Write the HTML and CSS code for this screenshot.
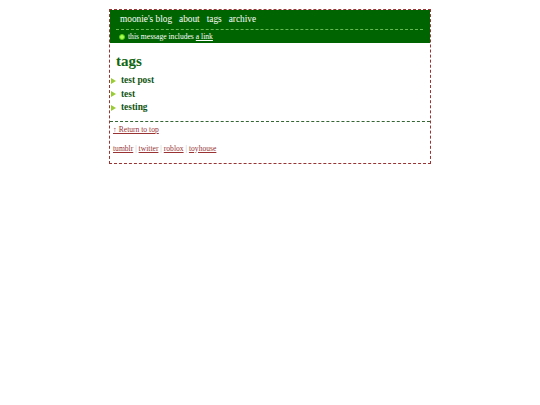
FILE: index.html
```html
<!DOCTYPE html>
<html>
<head>
<meta charset="utf-8">
<link rel="stylesheet" href="styles.css">
</head>
<body>
<div class="wrap">
  <div class="header">
    <div class="nav">
      <a href="#">moonie's blog</a>
      <a href="#">about</a>
      <a href="#">tags</a>
      <a href="#">archive</a>
    </div>
    <div class="msg"><span class="dot"></span>this message includes <a href="#">a link</a></div>
  </div>
  <div class="content">
    <h1 class="title">tags</h1>
    <ul class="tags">
      <li><a href="#">test post</a></li>
      <li><a href="#">test</a></li>
      <li><a href="#">testing</a></li>
    </ul>
  </div>
  <div class="footer">
    <p class="top"><a href="#">↑ Return to top</a></p>
    <p class="links"><a href="#">tumblr</a> <span class="sep">|</span> <a href="#">twitter</a> <span class="sep">|</span> <a href="#">roblox</a> <span class="sep">|</span> <a href="#">toyhouse</a></p>
  </div>
</div>
</body>
</html>
```

FILE: styles.css
```css
html, body {
  margin: 0;
  padding: 0;
  background: #ffffff;
}
body {
  font-family: "Liberation Serif", "Times New Roman", serif;
}
.wrap {
  width: 322px;
  box-sizing: border-box;
  margin: 9px auto 0;
  border: 1px dashed #993333;
}
.header {
  background: #006400;
  padding: 2px 7px 0 6px;
  color: #ffffff;
}
.nav {
  display: flex;
  gap: 7px;
  padding: 0 0 3px 4px;
  line-height: 14px;
  font-size: 9.3px;
  border-bottom: 1px dashed #66bb55;
}
.nav a {
  color: #ffffff;
  text-decoration: none;
}
.msg {
  display: flex;
  align-items: center;
  height: 13px;
  padding-left: 3px;
  font-size: 7.6px;
}
.msg a {
  color: #ffffff;
  text-decoration: underline;
  margin-left: 2px;
}
.dot {
  width: 4px;
  height: 4px;
  border-radius: 50%;
  background: #aaff55;
  border: 1px solid #55cc11;
  margin-right: 3px;
}
.content {
  padding: 9px 0 6px 0;
  border-bottom: 1px dashed #336633;
}
.title {
  margin: 0 0 4px 6px;
  font-size: 15px;
  line-height: 18px;
  font-weight: bold;
  color: #116611;
}
.tags {
  list-style: none;
  margin: 0;
  padding: 0;
}
.tags li {
  display: flex;
  align-items: center;
  line-height: 13.5px;
  font-size: 9.4px;
  font-weight: bold;
}
.tags li::before {
  content: "";
  width: 0;
  height: 0;
  border-top: 3px solid transparent;
  border-bottom: 3px solid transparent;
  border-left: 5px solid #99cc33;
  margin: 0 5px 0 1px;
}
.tags a {
  color: #115511;
  text-decoration: none;
}
.footer {
  padding: 3px 3px 9px;
  font-size: 7.6px;
}
.footer p {
  margin: 0;
  line-height: 10px;
}
.footer .links {
  margin-top: 9px;
}
.footer a {
  color: #993333;
  text-decoration: underline;
}
.sep {
  color: #bbbbbb;
}
```
